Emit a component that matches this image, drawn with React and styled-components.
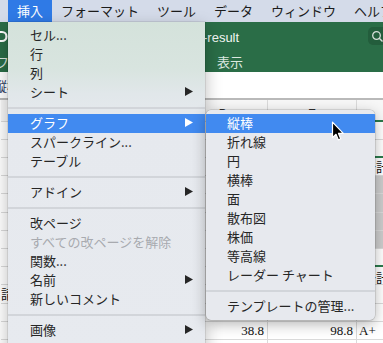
import React from 'react';
import styled, { createGlobalStyle } from 'styled-components';

const GlobalStyle = createGlobalStyle`
  * { box-sizing: border-box; }
  html, body { margin: 0; padding: 0; background: #ffffff; overflow: hidden; }
  body { width: 383px; height: 343px; }
`;

const Screen = styled.div`
  position: relative;
  width: 383px;
  height: 343px;
  overflow: hidden;
  font-family: "Noto Sans CJK JP", sans-serif;
  font-size: 13px;
  background: #fff;
`;

/* ---------- macOS menu bar ---------- */
const MenuBar = styled.nav`
  display: flex;
  height: 22px;
  padding-left: 8px;
  background: #d4dbe9;
`;

const MenuBarItem = styled.div`
  padding: 0 9px;
  line-height: 22px;
  white-space: nowrap;
  color: ${p => (p.$active ? '#ffffff' : '#1c1c1c')};
  background: ${p => (p.$active ? '#2f7ae6' : 'transparent')};
`;

/* ---------- Excel window behind ---------- */
const AppWindow = styled.div`
  width: 520px;
`;

const Ribbon = styled.div`
  background: #2a6d47;
`;

const TitleRow = styled.div`
  display: flex;
  align-items: center;
  height: 28px;
`;

const UndoGlyph = styled.svg`
  flex: none;
  margin-left: -8px;
`;

const DocTitle = styled.div`
  flex: 1;
  padding-left: 154px;
  color: #f2f6f3;
  font-family: "Liberation Sans", "Noto Sans CJK JP", sans-serif;
  font-size: 13px;
  white-space: nowrap;
`;

const SearchBox = styled.div`
  flex: none;
  display: flex;
  align-items: center;
  width: 152px;
  height: 18px;
  padding-left: 3px;
  border-radius: 5px;
  background: #235d3c;
`;

const TabRow = styled.div`
  display: grid;
  grid-template-columns: 217px auto;
  align-items: center;
  height: 22px;
  color: #dbe8e0;
  white-space: nowrap;
`;

const FileTab = styled.div`
  margin-left: -4px;
  overflow: hidden;
`;

const Tab = styled.div``;

const FormulaBar = styled.div`
  display: flex;
  align-items: center;
  height: 28px;
  border-bottom: 2px solid #b9b9b9;
  background: #ffffff;
`;

const NameBox = styled.div`
  margin-left: -6px;
  color: #2b3a60;
`;

const Sheet = styled.div`
  display: grid;
  grid-template-columns: repeat(5, 89px);
  grid-template-rows: 21.7px;
  grid-auto-rows: 18.2px;
  margin-left: 1px;
`;

const Cell = styled.div`
  overflow: hidden;
  white-space: nowrap;
  padding: 0 3px;
  border-right: 1px solid #dadada;
  border-bottom: ${p => (p.$green ? '2px solid #2b7a4c' : '1px solid #dadada')};
  background: ${p => p.$fill || '#ffffff'};
  text-align: ${p => p.$align || 'left'};
  font-family: "Liberation Serif", "Noto Sans CJK JP", serif;
  font-size: 13px;
  line-height: 17px;
  color: #111;
`;

const HeadCell = styled(Cell)`
  background: #f7f7f7;
  text-align: center;
  font-family: "Liberation Sans", sans-serif;
  font-size: 12px;
  line-height: 14px;
  padding-top: 7px;
  color: #333;
`;

const TextCell = styled(Cell)`
  padding-left: ${p => p.$pad ?? 6}px;
  padding-top: ${p => (p.$low ? 2 : 0)}px;
  font-family: "Noto Sans CJK JP", sans-serif;
  line-height: 18px;
`;

const ValueCell = styled(Cell)`
  padding-left: 2px;
`;

/* ---------- dropdown menus ---------- */
const Menu = styled.div`
  position: absolute;
  left: 8px;
  top: 22px;
  width: 197px;
  padding: 4px 0;
  background: linear-gradient(
    to bottom,
    #d4e2db 0px,
    #d8e4df 46px,
    #e1e7ea 72px,
    #e6e9ee 100px,
    #e7eaef 100%
  );
  box-shadow: 0 6px 16px rgba(0, 0, 0, 0.28), 0 0 0 0.5px rgba(0, 0, 0, 0.16);
`;

const SubMenu = styled(Menu)`
  left: 206px;
  top: 110px;
  width: 169px;
  border-radius: 5px;
  overflow: hidden;
  background: #e7e9ee;
  box-shadow: 0 4px 14px rgba(0, 0, 0, 0.3), 0 0 0 0.5px rgba(0, 0, 0, 0.2);
`;

const Item = styled.div`
  display: flex;
  align-items: center;
  justify-content: space-between;
  height: 19px;
  padding: 0 12px 2px ${p => p.$inset || 22}px;
  white-space: nowrap;
  color: ${p => (p.$disabled ? '#a8aaaf' : p.$hl ? '#ffffff' : '#262626')};
  background: ${p => (p.$hl ? '#418af0' : 'transparent')};
`;

const Label = styled.span`
  line-height: 17px;
`;

const Separator = styled.div`
  display: flex;
  align-items: center;
  height: 12px;
  &::before {
    content: '';
    flex: 1;
    height: 2px;
    background: #d2d5da;
  }
`;

const Cursor = styled.svg`
  position: absolute;
  left: 331px;
  top: 121px;
`;

const Arrow = () => (
  <svg width="8" height="9" viewBox="0 0 8 9" aria-hidden="true">
    <polygon points="0,0 8,4.5 0,9" fill="currentColor" />
  </svg>
);

const mainItems = [
  { t: 'セル...' },
  { t: '行' },
  { t: '列' },
  { t: 'シート', sub: true },
  { sep: true },
  { t: 'グラフ', sub: true, hl: true },
  { t: 'スパークライン...' },
  { t: 'テーブル' },
  { sep: true },
  { t: 'アドイン', sub: true },
  { sep: true },
  { t: '改ページ' },
  { t: 'すべての改ページを解除', disabled: true },
  { t: '関数...' },
  { t: '名前', sub: true },
  { t: '新しいコメント' },
  { sep: true },
  { t: '画像', sub: true },
  { t: 'SmartArt...' },
];

const chartItems = [
  { t: '縦棒', hl: true },
  { t: '折れ線' },
  { t: '円' },
  { t: '横棒' },
  { t: '面' },
  { t: '散布図' },
  { t: '株価' },
  { t: '等高線' },
  { t: 'レーダー チャート' },
  { sep: true },
  { t: 'テンプレートの管理...' },
];

const menuBarItems = ['挿入', 'フォーマット', 'ツール', 'データ', 'ウィンドウ', 'ヘルプ'];

const GRAY = '#cdcdcd';
const rows = [
  [{}, {}, {}, {}, {}],
  [{}, {}, {}, {}, { green: true }],
  [{}, {}, {}, {}, { text: '合計' }],
  [{}, {}, {}, {}, { fill: GRAY }],
  [{}, {}, {}, {}, { fill: GRAY }],
  [{}, {}, {}, {}, { fill: GRAY }],
  [{}, {}, {}, {}, { fill: GRAY }],
  [{}, {}, {}, {}, { green: true }],
  [{}, {}, {}, {}, { text: '合計', low: true }],
  [{ text: '請求額', pad: 0 }, {}, {}, {}, {}],
  [{}, {}, {}, {}, {}],
  [{}, {}, { num: '38.8' }, { num: '98.8' }, { val: 'A+' }],
  [{}, {}, {}, {}, {}],
];

function renderMenu(items, inset) {
  return items.map((it, i) =>
    it.sep ? (
      <Separator key={i} />
    ) : (
      <Item key={i} $hl={it.hl} $disabled={it.disabled} $inset={inset}>
        <Label>{it.t}</Label>
        {it.sub && <Arrow />}
      </Item>
    )
  );
}

export default function App() {
  return (
    <Screen>
      <GlobalStyle />
      <MenuBar>
        {menuBarItems.map((m, i) => (
          <MenuBarItem key={m} $active={i === 0}>{m}</MenuBarItem>
        ))}
      </MenuBar>

      <AppWindow>
        <Ribbon>
          <TitleRow>
            <UndoGlyph width="18" height="18" viewBox="0 0 18 18">
              <path d="M4 5 H10 A4.5 4.5 0 0 1 10 14 H6" fill="none" stroke="#ffffff" strokeWidth="2.2" />
              <polygon points="1,5 5,1.5 5,8.5" fill="#ffffff" />
            </UndoGlyph>
            <DocTitle>成績表-result</DocTitle>
            <SearchBox>
              <svg width="12" height="12" viewBox="0 0 12 12">
                <circle cx="5.5" cy="5.5" r="3.8" fill="none" stroke="#d5ddd8" strokeWidth="1.3" />
                <line x1="8.3" y1="8.3" x2="11.5" y2="11.5" stroke="#d5ddd8" strokeWidth="1.4" />
              </svg>
            </SearchBox>
          </TitleRow>
          <TabRow>
            <FileTab>ファイル</FileTab>
            <Tab>表示</Tab>
          </TabRow>
        </Ribbon>

        <FormulaBar>
          <NameBox>縦棒</NameBox>
        </FormulaBar>

        <Sheet>
          {['B', 'C', 'D', 'E', 'F'].map((c, i) => (
            <HeadCell key={c} $green={i === 4}>{c}</HeadCell>
          ))}
          {rows.map((r, ri) =>
            r.map((c, ci) => {
              const k = `${ri}-${ci}`;
              if (c.text) return <TextCell key={k} $pad={c.pad} $low={c.low}>{c.text}</TextCell>;
              if (c.num) return <Cell key={k} $align="right">{c.num}</Cell>;
              if (c.val) return <ValueCell key={k}>{c.val}</ValueCell>;
              return <Cell key={k} $fill={c.fill} $green={c.green} />;
            })
          )}
        </Sheet>
      </AppWindow>

      <Menu>{renderMenu(mainItems, 22)}</Menu>
      <SubMenu>{renderMenu(chartItems, 21)}</SubMenu>

      <Cursor width="14" height="21" viewBox="0 0 14 21">
        <path
          d="M1.5 1.2 L1.5 16.6 L5 13.3 L7.4 18.9 L9.8 17.9 L7.5 12.4 L12.3 12.4 Z"
          fill="#000000"
          stroke="#ffffff"
          strokeWidth="1.2"
          strokeLinejoin="round"
        />
      </Cursor>
    </Screen>
  );
}
